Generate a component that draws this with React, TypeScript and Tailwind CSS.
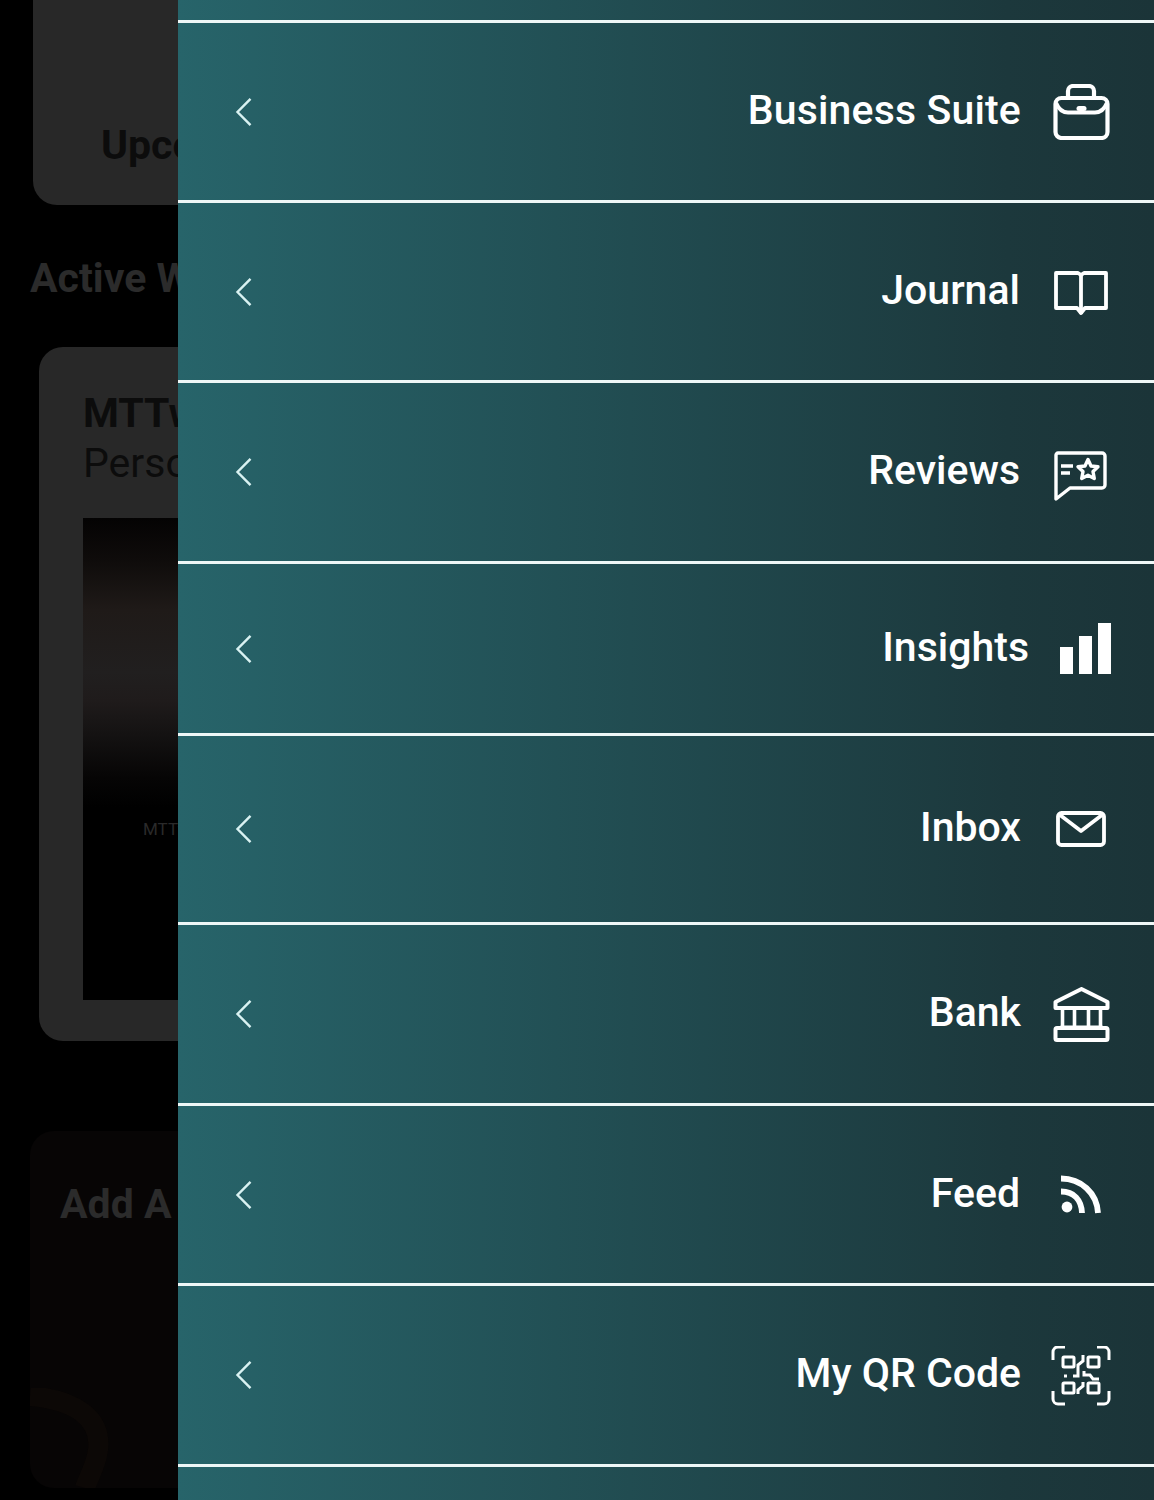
const W = "#ffffff";

function Chevron() {
  return (
    <svg width="18" height="32" viewBox="0 0 18 32" fill="none" className="shrink-0">
      <path d="M15.5 2.8 L2.5 16 L15.5 29.2" stroke="#d9f2f2" strokeWidth="2.4" />
    </svg>
  );
}

function Briefcase() {
  return (
    <svg width="60" height="56" viewBox="0 0 60 56" fill="none" stroke={W} strokeWidth="4.2">
      <rect x="4.5" y="14" width="52" height="40" rx="6" />
      <path d="M17 14 V7 a5 5 0 0 1 5-5 h16 a5 5 0 0 1 5 5 v7" />
      <path d="M5 19 C8 26 12 28.5 17 28.5 H44 C49 28.5 53 26 56 19" />
      <rect x="25.5" y="22" width="10" height="5" rx="2.5" fill={W} stroke="none" />
    </svg>
  );
}

function Book() {
  return (
    <svg width="60" height="46" viewBox="0 0 60 46" fill="none" stroke={W} strokeWidth="3.8">
      <path d="M5 2 H27 L30 4 L33 2 H55 V37 H34 L30 42 L26 37 H5 Z" strokeLinejoin="round" />
      <path d="M30 4 V43" />
    </svg>
  );
}

function Reviews() {
  return (
    <svg width="60" height="50" viewBox="0 0 60 50" fill="none" stroke={W} strokeWidth="3.4">
      <path d="M5 4 a2 2 0 0 1 2-2 H51 a3 3 0 0 1 3 3 V34 a3 3 0 0 1-3 3 H19 L5 48 Z" strokeLinejoin="round" />
      <path d="M10 15 H22 M10 22 H19" />
      <path d="M37 8.5 L40 15 L47 15.8 L42 20.6 L43.3 27.5 L37 24.2 L30.7 27.5 L32 20.6 L27 15.8 L34 15 Z" strokeLinejoin="round" />
    </svg>
  );
}

function Bars() {
  return (
    <svg width="60" height="52" viewBox="0 0 60 52" fill={W}>
      <rect x="9" y="24" width="13" height="27" />
      <rect x="28" y="13" width="13" height="38" />
      <rect x="47" y="0" width="13" height="51" />
    </svg>
  );
}

function Mail() {
  return (
    <svg width="60" height="36" viewBox="0 0 60 36" fill="none" stroke={W} strokeWidth="3.8">
      <rect x="7" y="2" width="46" height="32" rx="3.5" />
      <path d="M9 4 L30 20 L51 4" strokeLinejoin="round" />
    </svg>
  );
}

function Bank() {
  return (
    <svg width="60" height="55" viewBox="0 0 60 55" fill="none" stroke={W} strokeWidth="4">
      <path d="M30.5 2 L4.5 15 V21 H56.5 V15 Z" strokeLinejoin="round" />
      <path d="M11.5 21 V41 M23.5 21 V41 M37.5 21 V41 M49.5 21 V41" strokeWidth="3.6" />
      <path d="M9.5 40 H51.5" strokeWidth="3" />
      <rect x="4.5" y="41" width="52" height="12" rx="1.5" />
    </svg>
  );
}

function Rss() {
  return (
    <svg width="60" height="40" viewBox="0 0 60 40" fill="none" stroke={W}>
      <circle cx="16" cy="32" r="5.4" fill={W} stroke="none" />
      <path d="M10 16.5 C 23 16.5 30.5 25 31 38" strokeWidth="5.8" />
      <path d="M10 3.5 C 30 3.5 46 18 47 38" strokeWidth="5.8" />
    </svg>
  );
}

function Qr() {
  return (
    <svg width="60" height="60" viewBox="0 0 60 60" fill="none" stroke={W} strokeWidth="3">
      <path d="M2 14 V6 a5 5 0 0 1 5-5 H14" />
      <path d="M46 1 H53 a5 5 0 0 1 5 5 V14" />
      <path d="M2 45 V53 a5 5 0 0 0 5 5 H14" />
      <path d="M46 58 H53 a5 5 0 0 0 5-5 V45" />
      <rect x="12" y="11" width="11" height="10" rx="1" />
      <rect x="37" y="11" width="11" height="10" rx="1" />
      <rect x="12" y="37" width="11" height="10" rx="1" />
      <rect x="37" y="37" width="11" height="10" rx="1" />
      <path d="M32 9 V15 L27 19 V30 H22" />
      <path d="M13 30 H16" />
      <path d="M33 25 V29 H39 L42 33 H48" />
      <path d="M32 36 V40 L27 44 V48" />
    </svg>
  );
}

const rows = [
  { h: "h-[180px]", label: "Business Suite", mr: "mr-[30px]", icon: <Briefcase />, shift: "mt-0", track: "tracking-[0.15px]" },
  { h: "h-[180px]", label: "Journal", mr: "mr-[31px]", icon: <Book />, shift: "mt-[5px]", track: "tracking-normal" },
  { h: "h-[181px]", label: "Reviews", mr: "mr-[31px]", icon: <Reviews />, shift: "mt-[8px]", track: "tracking-normal" },
  { h: "h-[172px]", label: "Insights", mr: "mr-[22px]", icon: <Bars />, shift: "mt-0", track: "tracking-normal" },
  { h: "h-[189px]", label: "Inbox", mr: "mr-[30px]", icon: <Mail />, shift: "mt-0", track: "tracking-normal" },
  { h: "h-[181px]", label: "Bank", mr: "mr-[30px]", icon: <Bank />, shift: "mt-0", track: "tracking-normal" },
  { h: "h-[180px]", label: "Feed", mr: "mr-[31px]", icon: <Rss />, shift: "mt-0", track: "tracking-normal" },
  { h: "h-[181px]", label: "My QR Code", mr: "mr-[30px]", icon: <Qr />, shift: "mt-[1px]", track: "tracking-normal" },
];

function Backdrop() {
  return (
    <div className="w-[178px] shrink-0 overflow-hidden bg-black h-full flex flex-col font-['Roboto',sans-serif]">
      <div className="w-[500px] h-[205px] ml-[33px] shrink-0 rounded-bl-[24px] bg-[#282828] flex flex-col justify-end pl-[68px] pb-[38px]">
        <span className="text-[41px] leading-[44px] font-bold text-[#0c0c0c]">Upcoming</span>
      </div>
      <div className="ml-[30px] mt-[50px] w-[500px] text-[41px] leading-[46px] font-bold text-[#2b2b2b] shrink-0">Active Workspaces</div>
      <div className="ml-[39px] mt-[46px] w-[500px] h-[694px] shrink-0 rounded-l-[24px] bg-[#282828] pl-[44px] pt-[42px] flex flex-col">
        <span className="text-[41px] leading-[48px] font-bold text-[#0c0c0c]">MTTwins</span>
        <span className="text-[41px] leading-[50px] text-[#0c0c0c] mt-[1px]">Personal</span>
        <div className="mt-[30px] h-[482px] bg-[linear-gradient(180deg,#040303_0%,#0f0c0b_9%,#1f1a18_19%,#211f1f_32%,#1f1b1b_38%,#141212_45%,#060505_54%,#000000_60%,#000000_100%)] pl-[60px] pt-[300px]">
          <span className="text-[17px] leading-[22px] block text-[#2a2a2a]">MTTwins</span>
        </div>
      </div>
      <div className="relative ml-[30px] mt-[90px] w-[500px] h-[357px] shrink-0 overflow-hidden rounded-l-[24px] bg-[#070505] pl-[30px] pt-[50px]">
        <svg className="absolute left-0 bottom-0" width="148" height="100" viewBox="0 0 148 100" fill="none">
          <path d="M0 8 C 45 12 72 30 68 62 C 66 78 58 90 55 100" stroke="#0c0806" strokeWidth="20" />
        </svg>
        <span className="relative text-[41px] leading-[46px] font-bold text-[#2b2b2b]">Add A Workspace</span>
      </div>
    </div>
  );
}

export default function App() {
  return (
    <div className="w-[1154px] h-[1500px] overflow-hidden flex bg-black">
      <Backdrop />
      <div className="flex-1 h-full flex flex-col bg-[linear-gradient(90deg,#27646a_0%,#1c383c_85%,#1b3438_100%)] font-['Roboto',sans-serif] text-white">
        <div className="h-[20px] shrink-0" />
        {rows.map((r) => (
          <div key={r.label} className={`${r.h} shrink-0 border-t-[3px] border-[#eef7f7] flex items-center pl-[57px] pr-[43px]`}>
            <Chevron />
            <span className={`ml-auto ${r.mr} mb-[4px] text-[41px] leading-[46px] font-medium ${r.track}`}>{r.label}</span>
            <span className={`w-[60px] flex justify-center shrink-0 ${r.shift}`}>{r.icon}</span>
          </div>
        ))}
        <div className="flex-1 border-t-[3px] border-[#eef7f7]" />
      </div>
    </div>
  );
}
